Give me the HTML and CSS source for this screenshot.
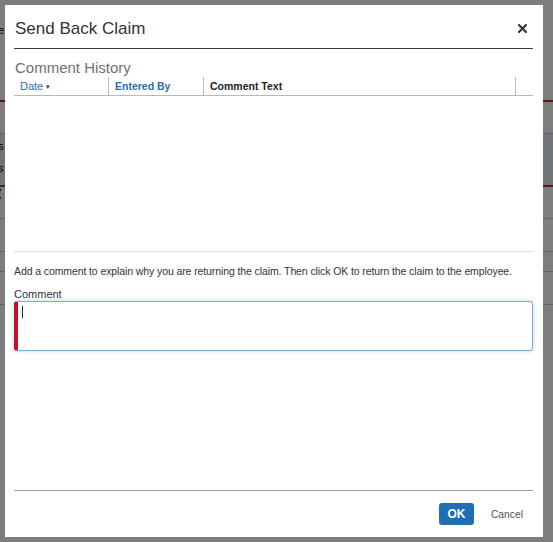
FILE: index.html
```html
<!DOCTYPE html>
<html lang="en">
<head>
    <meta charset="UTF-8">
    <meta name="viewport" content="width=device-width, initial-scale=1.0">
    <title>Send Back Claim</title>
    <link rel="stylesheet" href="styles.css">
</head>
<body>
    <!-- report page sitting under the modal -->
    <div class="page">
        <div class="page-top"><span class="page-text">e</span></div>
        <div class="page-row row-alert"></div>
        <div class="page-row row-selected">
            <span class="page-text">s</span>
            <span class="page-text">s</span>
        </div>
        <div class="page-row row-alert"><span class="page-text">(</span></div>
        <div class="page-row"></div>
        <div class="page-row row-thin"></div>
        <div class="page-row"></div>
        <div class="page-row"></div>
    </div>

    <div class="overlay">
        <div class="modal">
            <div class="modal-header">
                <h1 class="modal-title">Send Back Claim</h1>
                <button class="close-btn" aria-label="Close">
                    <svg width="9" height="9" viewBox="0 0 9 9">
                        <path d="M1 1 L8 8 M8 1 L1 8" stroke="#333" stroke-width="2.1" stroke-linecap="square"/>
                    </svg>
                </button>
            </div>

            <h2 class="section-title">Comment History</h2>
            <div class="grid">
                <div class="grid-head">
                    <div class="col col-date">Date <span class="sort-arrow">&#9662;</span></div>
                    <div class="col col-by">Entered By</div>
                    <div class="col col-text">Comment Text</div>
                    <div class="col col-end"></div>
                </div>
                <div class="grid-body"></div>
            </div>

            <p class="instructions">Add a comment to explain why you are returning the claim. Then click OK to return the claim to the employee.</p>
            <label class="field-label">Comment</label>
            <div class="comment-input"><span class="caret"></span></div>

            <div class="spacer"></div>

            <div class="modal-footer">
                <button class="btn-ok">OK</button>
                <button class="btn-cancel">Cancel</button>
            </div>
        </div>
    </div>
</body>
</html>
```

FILE: styles.css
```css
* {
    margin: 0;
    padding: 0;
    box-sizing: border-box;
}

body {
    font-family: "Liberation Sans", Arial, sans-serif;
    font-size: 11px;
    color: #333;
    background: #fff;
    width: 553px;
    height: 542px;
    overflow: hidden;
}

/* page behind the dialog */
.page {
    width: 100%;
}

.page-top {
    height: 100px;
    padding: 24px 0 0 0;
}

.page-text {
    display: block;
    margin-left: -2px;
    font-size: 11px;
    color: #000;
    line-height: 12px;
}

.page-row {
    height: 33px;
    border-top: 1px solid #c9c9c9;
}

.row-alert {
    border-top: 2px solid #b03040;
}

.row-selected {
    height: 52px;
    background: #e6eef6;
    padding-top: 6px;
}

.row-selected .page-text {
    margin-bottom: 10px;
}

.row-thin {
    height: 20px;
}

.overlay {
    position: fixed;
    inset: 0;
    background: rgba(0, 0, 0, 0.51);
}

/* dialog */
.modal {
    position: absolute;
    left: 5px;
    top: 5px;
    width: 538px;
    height: 532px;
    background: #fff;
    display: flex;
    flex-direction: column;
    padding: 0 10px 0 9px;
}

.modal-header {
    display: flex;
    align-items: center;
    justify-content: space-between;
    padding: 12px 0 7px 1px;
    border-bottom: 1px solid #3a3a3a;
}

.modal-title {
    font-size: 17px;
    font-weight: normal;
    line-height: 24px;
    color: #333;
}

.close-btn {
    background: none;
    border: none;
    width: 9px;
    height: 9px;
    margin-right: 6px;
    margin-top: -2px;
    display: flex;
}

.section-title {
    font-size: 15px;
    font-weight: normal;
    line-height: 18px;
    color: #707070;
    margin-top: 10px;
    padding-left: 1px;
}

.grid-head {
    display: flex;
    height: 19px;
    border-bottom: 1px solid #b8b8b8;
}

.col {
    line-height: 18px;
    font-size: 10.5px;
    padding-left: 6px;
    border-left: 1px solid #bbb;
}

.col-date {
    width: 94px;
    border-left: none;
    color: #2b6cb0;
    font-size: 11px;
}

.sort-arrow {
    font-size: 7px;
    vertical-align: 1px;
    color: #333;
}

.col-by {
    width: 95px;
    color: #2b6cb0;
    font-weight: bold;
}

.col-text {
    width: 312px;
    color: #222;
    font-weight: bold;
}

.col-end {
    flex: 1;
}

.grid-body {
    height: 156px;
    border-bottom: 1px solid #dcdcdc;
}

.instructions {
    margin-top: 12px;
    line-height: 14px;
    font-size: 10.5px;
    letter-spacing: -0.1px;
    white-space: nowrap;
    color: #333;
}

.field-label {
    display: block;
    margin-top: 9px;
    line-height: 14px;
    color: #333;
}

.comment-input {
    height: 50px;
    border: 1px solid #86acd4;
    border-left: 4px solid #c8102e;
    border-radius: 3px;
    box-shadow: 0 0 4px rgba(102, 160, 220, 0.45);
    padding: 4px 0 0 4px;
}

.caret {
    display: block;
    width: 1px;
    height: 12px;
    background: #222;
}

.spacer {
    flex: 1;
}

.modal-footer {
    display: flex;
    justify-content: flex-end;
    align-items: center;
    border-top: 1px solid #9a9a9a;
    padding: 12px 0;
}

.btn-ok {
    width: 35px;
    height: 22px;
    background: #1f6db3;
    color: #fff;
    border: none;
    border-radius: 3px;
    font-family: inherit;
    font-size: 12px;
    font-weight: bold;
}

.btn-cancel {
    background: none;
    border: none;
    font-family: inherit;
    font-size: 10.3px;
    color: #555;
    margin-left: 9px;
    padding: 0 10px 0 8px;
    height: 22px;
}
```
